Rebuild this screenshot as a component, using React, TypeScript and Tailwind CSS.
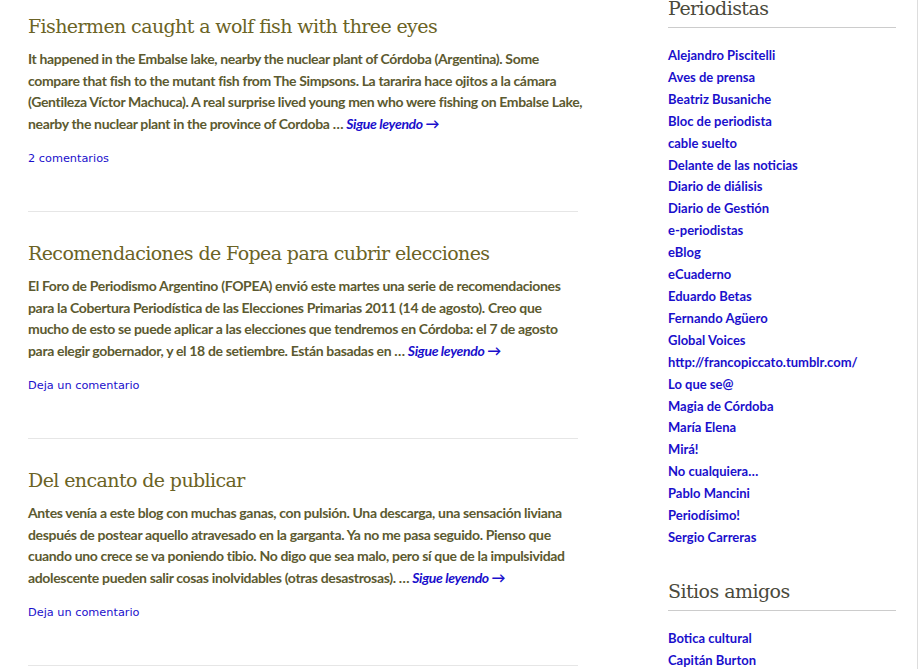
import React from "react";

const posts = [
  {
    title: "Fishermen caught a wolf fish with three eyes",
    lines: [
      "It happened in the Embalse lake, nearby the nuclear plant of Córdoba (Argentina). Some",
      "compare that fish to the mutant fish from The Simpsons. La tararira hace ojitos a la cámara",
      "(Gentileza Víctor Machuca). A real surprise lived young men who were fishing on Embalse Lake,",
      "nearby the nuclear plant in the province of Cordoba …",
    ],
    comments: "2 comentarios",
  },
  {
    title: "Recomendaciones de Fopea para cubrir elecciones",
    lines: [
      "El Foro de Periodismo Argentino (FOPEA) envió este martes una serie de recomendaciones",
      "para la Cobertura Periodística de las Elecciones Primarias 2011 (14 de agosto). Creo que",
      "mucho de esto se puede aplicar a las elecciones que tendremos en Córdoba: el 7 de agosto",
      "para elegir gobernador, y el 18 de setiembre. Están basadas en …",
    ],
    comments: "Deja un comentario",
  },
  {
    title: "Del encanto de publicar",
    lines: [
      "Antes venía a este blog con muchas ganas, con pulsión. Una descarga, una sensación liviana",
      "después de postear aquello atravesado en la garganta. Ya no me pasa seguido. Pienso que",
      "cuando uno crece se va poniendo tibio. No digo que sea malo, pero sí que de la impulsividad",
      "adolescente pueden salir cosas inolvidables (otras desastrosas). …",
    ],
    comments: "Deja un comentario",
  },
];

const periodistas = [
  "Alejandro Piscitelli",
  "Aves de prensa",
  "Beatriz Busaniche",
  "Bloc de periodista",
  "cable suelto",
  "Delante de las noticias",
  "Diario de diálisis",
  "Diario de Gestión",
  "e-periodistas",
  "eBlog",
  "eCuaderno",
  "Eduardo Betas",
  "Fernando Agüero",
  "Global Voices",
  "http://francopiccato.tumblr.com/",
  "Lo que se@",
  "Magia de Córdoba",
  "María Elena",
  "Mirá!",
  "No cualquiera…",
  "Pablo Mancini",
  "Periodísimo!",
  "Sergio Carreras",
];

const amigos = ["Botica cultural", "Capitán Burton"];

function Post({ p }: { p: (typeof posts)[number] }) {
  return (
    <article className="border-b border-[#e6e6e6] pt-[28px] pb-[45px]">
      <h2 className="font-['DejaVu_Serif',serif] text-[19px] tracking-[-0.6px] leading-[26px] text-[#6b6325]">
        {p.title}
      </h2>
      <p className="mt-[9px] font-['Lato',sans-serif] font-bold text-[14px] tracking-[-0.34px] leading-[21.5px] text-[#5c5a30] whitespace-nowrap">
        {p.lines.map((l, i) => (
          <React.Fragment key={i}>
            {l}
            {i < p.lines.length - 1 ? (
              <br />
            ) : (
              <>
                {" "}
                <a className="italic text-[#1a0fcc]">Sigue leyendo →</a>
              </>
            )}
          </React.Fragment>
        ))}
      </p>
      <div className="mt-[18px] font-['DejaVu_Sans',sans-serif] text-[11.3px] leading-[14px] text-[#1a0fcc]">
        {p.comments}
      </div>
    </article>
  );
}

function Widget({ title, items }: { title: string; items: string[] }) {
  return (
    <section>
      <h3 className="font-['DejaVu_Serif',serif] text-[19px] tracking-[-0.55px] leading-[26px] text-[#4b4a3c] border-b border-[#cccccc] pb-[6px]">
        {title}
      </h3>
      <ul className="mt-[17px] font-['Lato',sans-serif] font-bold text-[13px] leading-[21.9px] text-[#1a0fcc]">
        {items.map((it) => (
          <li key={it}>{it}</li>
        ))}
      </ul>
    </section>
  );
}

export default function App() {
  return (
    <div className="w-[921px] h-[669px] overflow-hidden bg-white">
      <div className="flex items-start">
        <main className="w-[550px] ml-[28px] mt-[-15px]">
          {posts.map((p) => (
            <Post key={p.title} p={p} />
          ))}
        </main>
        <aside className="w-[228px] ml-[90px] mt-[-5px] flex flex-col gap-[29px]">
          <Widget title="Periodistas" items={periodistas} />
          <Widget title="Sitios amigos" items={amigos} />
        </aside>
        <div className="ml-[21px] w-px h-[700px] bg-[#dddddd]" />
      </div>
    </div>
  );
}
